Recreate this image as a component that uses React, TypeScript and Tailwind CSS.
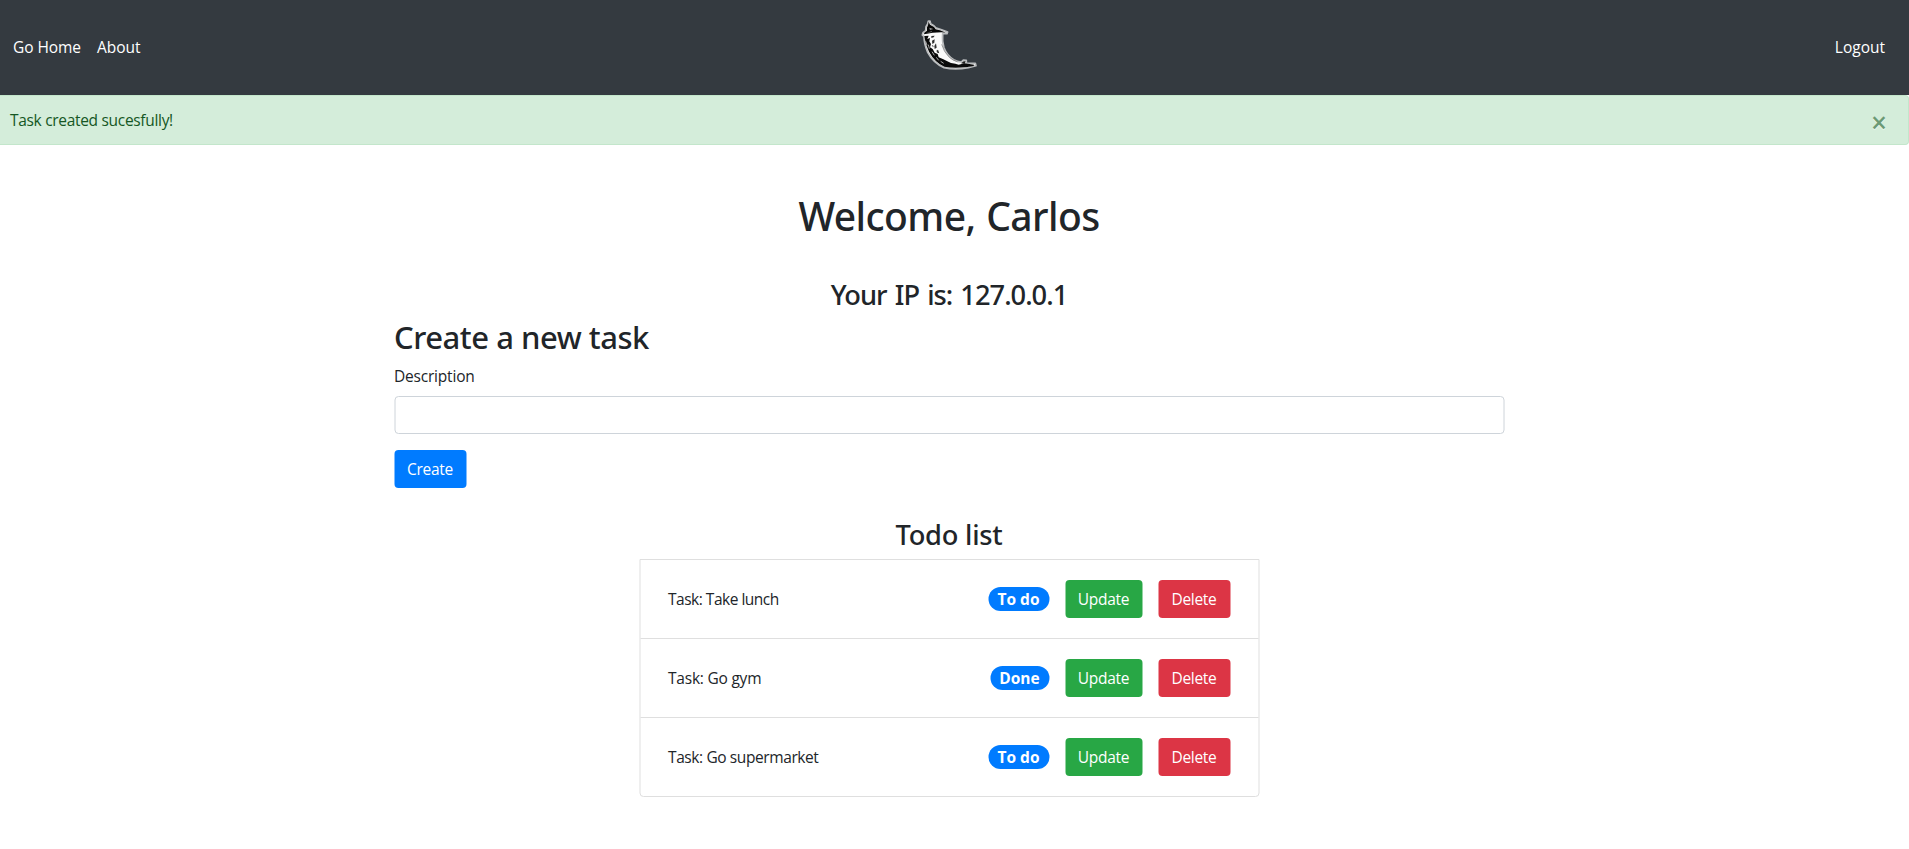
const tasks = [
  { text: "Take lunch", status: "To do", spacing: "tracking-[-0.49px]" },
  { text: "Go gym", status: "Done", spacing: "tracking-[-0.22px]" },
  { text: "Go supermarket", status: "To do", spacing: "tracking-[-0.4px]" },
];

const heading = "text-center font-['Noto_Sans',sans-serif] font-medium whitespace-nowrap";
const button = "flex h-[38px] items-center justify-center rounded text-white tracking-[-0.3px] leading-6";

function HornLogo() {
  return (
    <svg viewBox="0 0 300 285" className="h-[95px] w-[100px]" aria-label="Logo">
      <path
        d="M85 63 L90 63 L92 71 Q103 76 107 83 L125 89 L143 96 L141 101 L128 101 Q126 125 132 143 Q140 165 161 179 Q172 185 184 186 L190 180 L199 181 L199 189 L226 190 L228 197 L205 203 Q165 211 132 203 Q100 189 83 157 Q72 132 72 109 L67 105 L69 98 L77 92 L78 80 L83 72 Z"
        fill="#fafafa"
        stroke="#b9bbbd"
        strokeWidth="5"
        strokeLinejoin="round"
      />
      {/* cap and brim */}
      <path d="M86 65 L90 74 L102 81 L107 88 L120 91 L138 98 L124 97 L98 98 L72 103 L73 98 L81 92 L81 82 L84 76 Z" fill="#060606" />
      <path d="M88 83 L100 87 L90 90 Z M80 98 L95 94 L96 96 Z" fill="#9a9a9a" />
      {/* shaded outer curve */}
      <path
        d="M73 108 L86 107 L82 117 L90 114 L88 124 L93 132 L90 142 L98 147 L104 158 L113 162 L116 172 L130 178 L142 184 L153 189 L166 191 L176 194 L194 190 L222 194 L221 198 L202 201 Q160 206 133 200 Q104 187 87 155 Q75 131 73 108 Z"
        fill="#0a0a0a"
      />
      <path d="M94 108 L104 107 L101 112 L94 114 Z M96 122 L104 118 L103 128 L97 132 Z M103 138 L108 130 L110 143 L104 147 Z M109 152 L114 149 L118 160 L112 158 Z M95 137 L99 136 L101 142 Z" fill="#303030" />
      <path
        d="M77 124 L81 136 M85 134 L88 146 M96 155 L103 166 M109 172 L116 181 M122 184 L131 190 M190 186 L196 185"
        stroke="#c8c8c8"
        strokeWidth="2.5"
        fill="none"
      />
      <path d="M125 133 Q131 156 148 172 Q158 181 172 185" stroke="#777777" strokeWidth="2" fill="none" />
      <path d="M183 190 L191 184 L197 184 L194 192 Z" fill="#202020" />
    </svg>
  );
}

export default function App() {
  return (
    <div className="min-h-screen bg-white font-['Open_Sans','Noto_Sans',sans-serif] text-[15.5px] leading-6 whitespace-nowrap text-[#212529]">
      <nav className="flex h-[95px] items-center justify-between bg-[#343a40] pr-6 pl-[13px] text-white">
        <div className="flex w-[887px] gap-4 pb-px">
          <a className="w-[68px] tracking-[-0.06px]">Go Home</a>
          <a>About</a>
        </div>
        <HornLogo />
        <div className="flex flex-1 justify-end pb-px">
          <a>Logout</a>
        </div>
      </nav>

      <div className="flex h-[50px] justify-between rounded-r border border-l-0 border-[#c3e6cb] bg-[#d4edda] py-3 pr-[21px] pl-2.5 text-[#155724]">
        <span className="tracking-[-0.31px]">Task created sucesfully!</span>
        <button className="h-6 pt-0.5 text-[28px] leading-6 font-semibold opacity-55 [text-shadow:0_1px_0_#fff]">×</button>
      </div>

      <main className="mx-auto flex w-[1110px] -translate-x-[5.5px] flex-col pt-[47px]">
        <h1 className={`${heading} h-12 text-[39px] leading-[48px] tracking-[-0.6px] [word-spacing:1.2px]`}>Welcome, Carlos</h1>
        <h3 className={`${heading} mt-[38px] h-[33px] text-[27.25px] leading-[33px] tracking-[-0.98px] [word-spacing:2px]`}>Your IP is: 127.0.0.1</h3>

        <form className="mt-[7px] flex flex-col items-start">
          <h2 className={`${heading} h-[38px] text-[31px] leading-[38px] tracking-[-0.47px]`}>Create a new task</h2>
          <label className="mt-2 mb-2 tracking-[-0.2px]">Description</label>
          <input className="h-[38px] w-full rounded border border-[#ced4da] bg-white px-3" />
          <button type="button" className={`${button} mt-4 w-[72px] bg-[#007bff]`}>Create</button>
        </form>

        <section className="mt-[29px] flex flex-col items-center">
          <h3 className={`${heading} h-[34px] pt-px text-[27.25px] leading-[34px] tracking-[-0.24px]`}>Todo list</h3>
          <ul className="mt-2 w-[620px] divide-y divide-[#dfdfdf] rounded-b border border-[#dfdfdf]">
            {tasks.map((task) => (
              <li key={task.text} className="flex h-[79px] items-center px-7 last:h-[78px]">
                <span className={`flex-1 ${task.spacing}`}>Task: {task.text}</span>
                <span
                  className={`mr-4 flex h-6 items-center justify-center rounded-full bg-[#007bff] font-bold text-white ${
                    task.status === "Done" ? "w-[59px]" : "w-[61px]"
                  }`}
                >
                  {task.status}
                </span>
                <button className={`${button} mr-4 w-[77px] bg-[#28a745]`}>Update</button>
                <button className={`${button} w-[72px] bg-[#dc3545]`}>Delete</button>
              </li>
            ))}
          </ul>
        </section>
      </main>
    </div>
  );
}
